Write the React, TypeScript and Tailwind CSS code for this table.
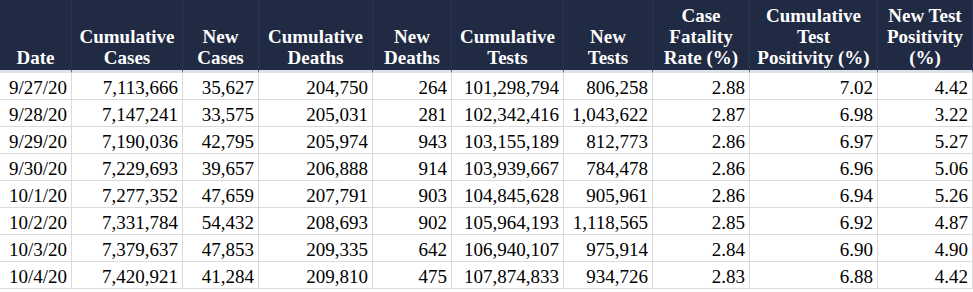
import React from "react";

const headers: string[][] = [
  ["Date"],
  ["Cumulative", "Cases"],
  ["New", "Cases"],
  ["Cumulative", "Deaths"],
  ["New", "Deaths"],
  ["Cumulative", "Tests"],
  ["New", "Tests"],
  ["Case", "Fatality", "Rate (%)"],
  ["Cumulative", "Test", "Positivity (%)"],
  ["New Test", "Positivity", "(%)"],
];

const rows: string[][] = [
  ["9/27/20", "7,113,666", "35,627", "204,750", "264", "101,298,794", "806,258", "2.88", "7.02", "4.42"],
  ["9/28/20", "7,147,241", "33,575", "205,031", "281", "102,342,416", "1,043,622", "2.87", "6.98", "3.22"],
  ["9/29/20", "7,190,036", "42,795", "205,974", "943", "103,155,189", "812,773", "2.86", "6.97", "5.27"],
  ["9/30/20", "7,229,693", "39,657", "206,888", "914", "103,939,667", "784,478", "2.86", "6.96", "5.06"],
  ["10/1/20", "7,277,352", "47,659", "207,791", "903", "104,845,628", "905,961", "2.86", "6.94", "5.26"],
  ["10/2/20", "7,331,784", "54,432", "208,693", "902", "105,964,193", "1,118,565", "2.85", "6.92", "4.87"],
  ["10/3/20", "7,379,637", "47,853", "209,335", "642", "106,940,107", "975,914", "2.84", "6.90", "4.90"],
  ["10/4/20", "7,420,921", "41,284", "209,810", "475", "107,874,833", "934,726", "2.83", "6.88", "4.42"],
];

export default function App() {
  return (
    <div
      className="w-[973px] h-[292px] bg-white text-black"
      style={{ fontFamily: '"Liberation Serif", "Times New Roman", serif' }}
    >
      <div className="grid grid-cols-[72px_111px_76px_114px_79px_112px_89px_97px_128px_95px]">
        {headers.map((h, i) => (
          <div
            key={i}
            className="h-[73px] bg-[#212a43] border-b-[3px] border-b-[#dde2ea] border-r border-r-[#2b3452] flex flex-col justify-end items-center pb-[2px] text-white font-bold text-[19px] leading-[21px] text-center whitespace-nowrap"
          >
            {h.map((line, j) => (
              <span key={j}>{line}</span>
            ))}
          </div>
        ))}
        {rows.map((r, ri) =>
          r.map((c, ci) => (
            <div
              key={`${ri}-${ci}`}
              className="h-[27px] border-b border-r border-[#dadada] text-right pr-[4px] pt-[4px] text-[19px] leading-[21px] whitespace-nowrap"
            >
              {c}
            </div>
          ))
        )}
      </div>
    </div>
  );
}
